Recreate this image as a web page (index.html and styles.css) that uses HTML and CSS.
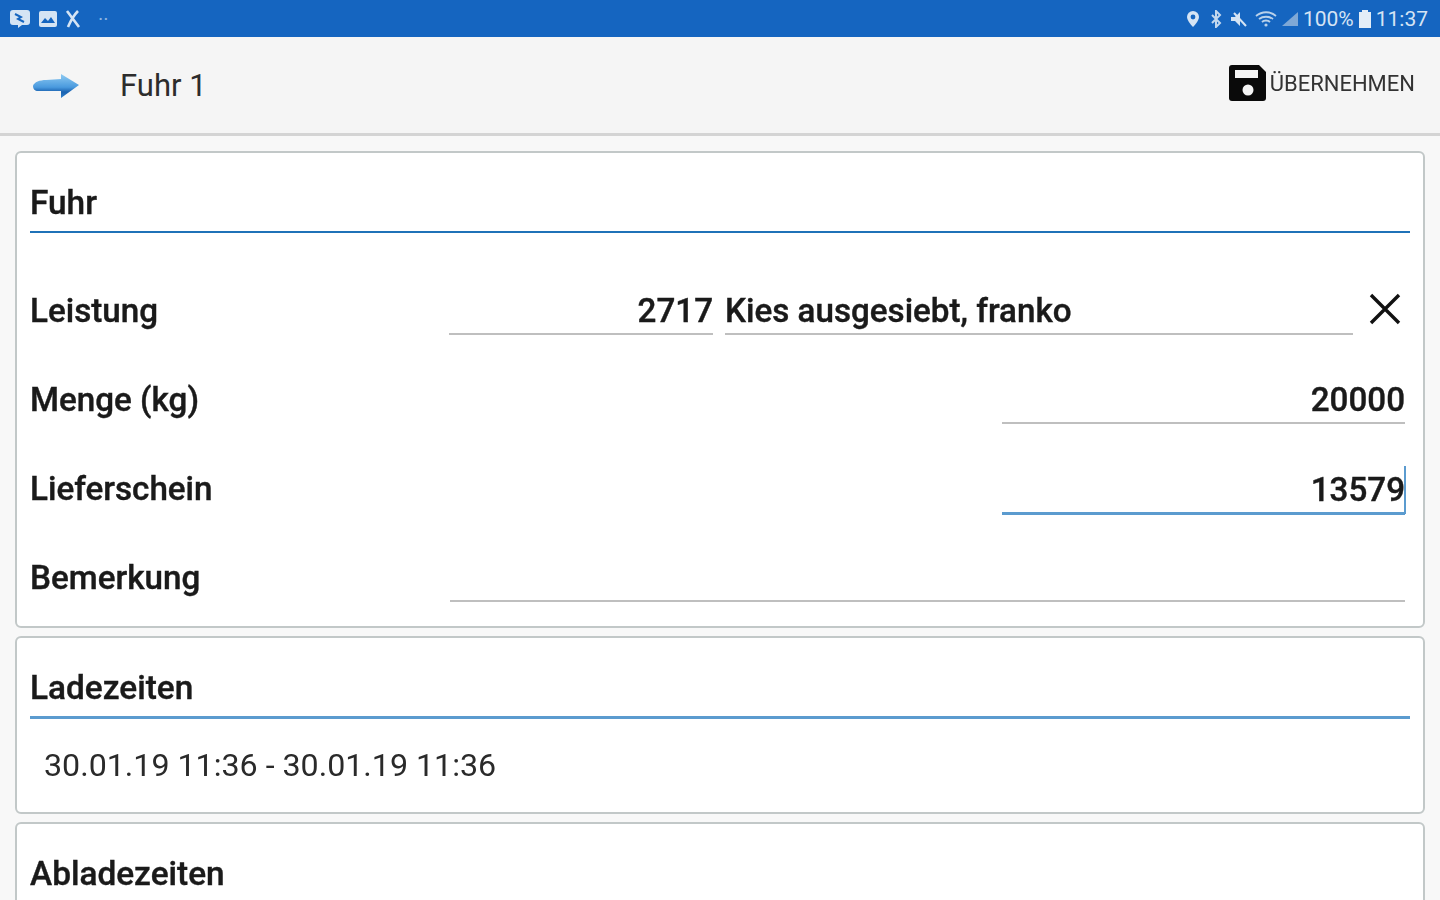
FILE: index.html
```html
<!DOCTYPE html>
<html>
<head>
    <title>Fuhr 1</title>
    <link rel="stylesheet" href="styles.css">
</head>
<body>
<div class="page">
  <div class="status-bar">
    <div class="status-left">
      <svg class="st-icon" width="22" height="20" viewBox="0 0 22 20"><path d="M4 1h14a3 3 0 0 1 3 3v9a3 3 0 0 1-3 3h-5l-4 3v-3H4a3 3 0 0 1-3-3V4a3 3 0 0 1 3-3z" fill="#d5e4f4"/><path d="M6 5l6 3-3 2 6 3" stroke="#1565c0" stroke-width="2" fill="none"/></svg>
      <svg class="st-icon" width="20" height="18" viewBox="0 0 20 18"><rect x="1" y="1" width="18" height="16" rx="2" fill="#d5e4f4"/><path d="M3 13l4-5 3 3 3-4 4 6z" fill="#1565c0"/></svg>
      <svg class="st-icon" width="16" height="20" viewBox="0 0 16 20"><path d="M2 2l12 16M13 2C9 6 6 11 3 18" stroke="#d5e4f4" stroke-width="2.6" fill="none"/></svg>
      <span class="st-dots">··</span>
    </div>
    <div class="status-right">
      <svg class="st-location" width="14" height="18" viewBox="0 0 14 18"><path d="M7 1a6 6 0 0 1 6 6c0 4-6 10-6 10S1 11 1 7a6 6 0 0 1 6-6z" fill="#d5e4f4"/><circle cx="7" cy="7" r="2.4" fill="#1565c0"/></svg>
      <svg class="st-bluetooth" width="12" height="18" viewBox="0 0 12 18"><path d="M2 5l8 8-4 4V1l4 4-8 8" stroke="#c3d8ee" stroke-width="2" fill="none"/></svg>
      <svg class="st-mute" width="18" height="18" viewBox="0 0 18 18"><path d="M1 7h4l5-5v14l-5-5H1z" fill="#d5e4f4"/><path d="M4 3l12 13" stroke="#d5e4f4" stroke-width="2"/></svg>
      <svg width="22" height="18" viewBox="0 0 22 18"><path d="M1 6c6-5 14-5 20 0M4 9c4-3 10-3 14 0M7 12c2-2 6-2 8 0" stroke="#b9d1ea" stroke-width="1.8" fill="none"/><circle cx="11" cy="15" r="1.6" fill="#b9d1ea"/></svg>
      <svg width="18" height="16" viewBox="0 0 18 16"><path d="M1 15L17 1v14z" fill="#7fa8d6"/></svg>
      <span class="st-text">100%</span>
      <svg width="14" height="18" viewBox="0 0 14 18"><path d="M4 0h6v2h3v16H1V2h3z" fill="#e3edf7"/></svg>
      <span class="st-text">11:37</span>
    </div>
  </div>

  <div class="toolbar">
    <div class="toolbar-left">
      <svg width="48" height="26" viewBox="0 0 48 26">
        <defs>
          <linearGradient id="arrow-fill" x1="0" y1="0" x2="0" y2="1">
            <stop offset="0" stop-color="#8fcbf2"/>
            <stop offset="0.55" stop-color="#4a9ade"/>
            <stop offset="0.75" stop-color="#1a62b0"/>
            <stop offset="1" stop-color="#2f80cc"/>
          </linearGradient>
        </defs>
        <path d="M1 14C2 10 8 8 14 8l15-1V2l18 11-18 13v-7H6c-3 0-5-2-5-5z" fill="url(#arrow-fill)"/>
      </svg>
      <span class="toolbar-title">Fuhr 1</span>
    </div>
    <div class="toolbar-action">
      <svg width="38" height="38" viewBox="0 0 38 38"><path d="M3 1h27l7 7v26a3 3 0 0 1-3 3H3a3 3 0 0 1-3-3V4a3 3 0 0 1 3-3z" fill="#0a0a0a"/><rect x="6" y="6" width="23" height="8" fill="#f5f5f5"/><circle cx="19" cy="26" r="5.5" fill="#f5f5f5"/></svg>
      <span class="action-label">ÜBERNEHMEN</span>
    </div>
  </div>

  <div class="content">
    <div class="card card-main">
      <div class="card-title title-thin">Fuhr</div>
      <div class="form-row">
        <div class="row-label">Leistung</div>
        <div class="field field-code">2717</div>
        <div class="field field-name">Kies ausgesiebt, franko</div>
        <svg class="clear-icon" width="32" height="32" viewBox="0 0 32 32"><path d="M2 2l28 28M30 2L2 30" stroke="#111" stroke-width="3.4" fill="none"/></svg>
      </div>
      <div class="form-row">
        <div class="row-label">Menge (kg)</div>
        <div class="field field-short">20000</div>
      </div>
      <div class="form-row">
        <div class="row-label">Lieferschein</div>
        <div class="field field-short field-active">13579<span class="cursor"></span></div>
      </div>
      <div class="form-row">
        <div class="row-label">Bemerkung</div>
        <div class="field field-wide"></div>
      </div>
    </div>

    <div class="card card-times">
      <div class="card-title">Ladezeiten</div>
      <div class="times-text">30.01.19 11:36 - 30.01.19 11:36</div>
    </div>

    <div class="card card-times">
      <div class="card-title">Abladezeiten</div>
    </div>
  </div>
</div>
</body>
</html>
```
FILE: styles.css
```css
* {
    margin: 0;
    padding: 0;
    box-sizing: border-box;
}

html, body {
    height: 900px;
    overflow: hidden;
}

body {
    font-family: Roboto, "Liberation Sans", sans-serif;
    background-color: #f8f8f8;
    color: #1a1a1a;
}

/* the source is a soft, upscaled capture */
.page {
    height: 900px;
    overflow: hidden;
    filter: blur(0.7px);
}

.status-bar {
    height: 37px;
    background-color: #1565c0;
    display: flex;
    justify-content: space-between;
    align-items: center;
    padding: 0 12px 0 9px;
    color: #d5e4f4;
}

.status-left, .status-right {
    display: flex;
    align-items: center;
}

.status-left {
    gap: 7px;
}

.status-right {
    gap: 4px;
}

.st-location {
    margin-right: 6px;
}

.st-bluetooth {
    margin-right: 4px;
}

.st-mute {
    margin-right: 3px;
}

.st-dots {
    margin-left: 10px;
    font-size: 20px;
    color: #8fb6e0;
}

.st-text {
    font-size: 21px;
}

.toolbar {
    height: 99px;
    background-color: #f5f5f5;
    border-bottom: 3px solid #d4d4d4;
    display: flex;
    justify-content: space-between;
    align-items: center;
    padding: 0 25px 0 32px;
}

.toolbar-left {
    display: flex;
    align-items: center;
    gap: 40px;
}

.toolbar-title {
    font-size: 31px;
    color: #2c2c2c;
}

.toolbar-action {
    display: flex;
    align-items: center;
    gap: 3px;
    padding-bottom: 4px;
}

.action-label {
    font-size: 22px;
    color: #333;
}

.content {
    padding: 15px 15px 0;
    display: flex;
    flex-direction: column;
    gap: 8px;
}

.card {
    background-color: #fff;
    border: 2px solid #c2c8c8;
    border-radius: 6px;
    padding: 0 13px;
}

.card-main {
    height: 477px;
    flex-shrink: 0;
}

.card-times {
    height: 178px;
    flex-shrink: 0;
}

.card-title {
    height: 81px;
    padding-top: 32px;
    line-height: 36px;
    font-size: 33.4px;
    font-weight: 500;
    -webkit-text-stroke: 0.4px;
    border-bottom: 3px solid #5b9bcf;
}

.title-thin {
    height: 80px;
    padding-top: 32px;
    border-bottom: 2px solid #1f72b8;
}

.form-row {
    height: 89px;
    display: flex;
    align-items: flex-end;
    gap: 12px;
    font-size: 33.2px;
    font-weight: 500;
    -webkit-text-stroke: 0.4px;
}

.card-main .card-title + .form-row {
    margin-top: 13px;
}

.row-label {
    line-height: 36px;
    padding-bottom: 6px;
    margin-right: auto;
}

.field {
    height: 44px;
    line-height: 40px;
    border-bottom: 2px solid #bfbfbf;
    white-space: nowrap;
}

.field-code {
    width: 264px;
    text-align: right;
}

.field-name {
    width: 628px;
}

.clear-icon {
    margin: 0 9px 10px 4px;
}

.field-short {
    width: 403px;
    text-align: right;
    margin-right: 5px;
    position: relative;
}

.field-wide {
    width: 955px;
    margin-right: 5px;
}

.field-active {
    height: 46px;
    line-height: 42px;
    margin-bottom: -2px;
    border-bottom: 3px solid #5b9bcf;
}

.cursor {
    position: absolute;
    right: -1px;
    top: -3px;
    width: 2px;
    height: 48px;
    background-color: #5b9bcf;
}

.times-text {
    font-size: 32.2px;
    padding: 28px 0 0 14px;
    line-height: 36px;
    color: #2a2a2a;
}
```
